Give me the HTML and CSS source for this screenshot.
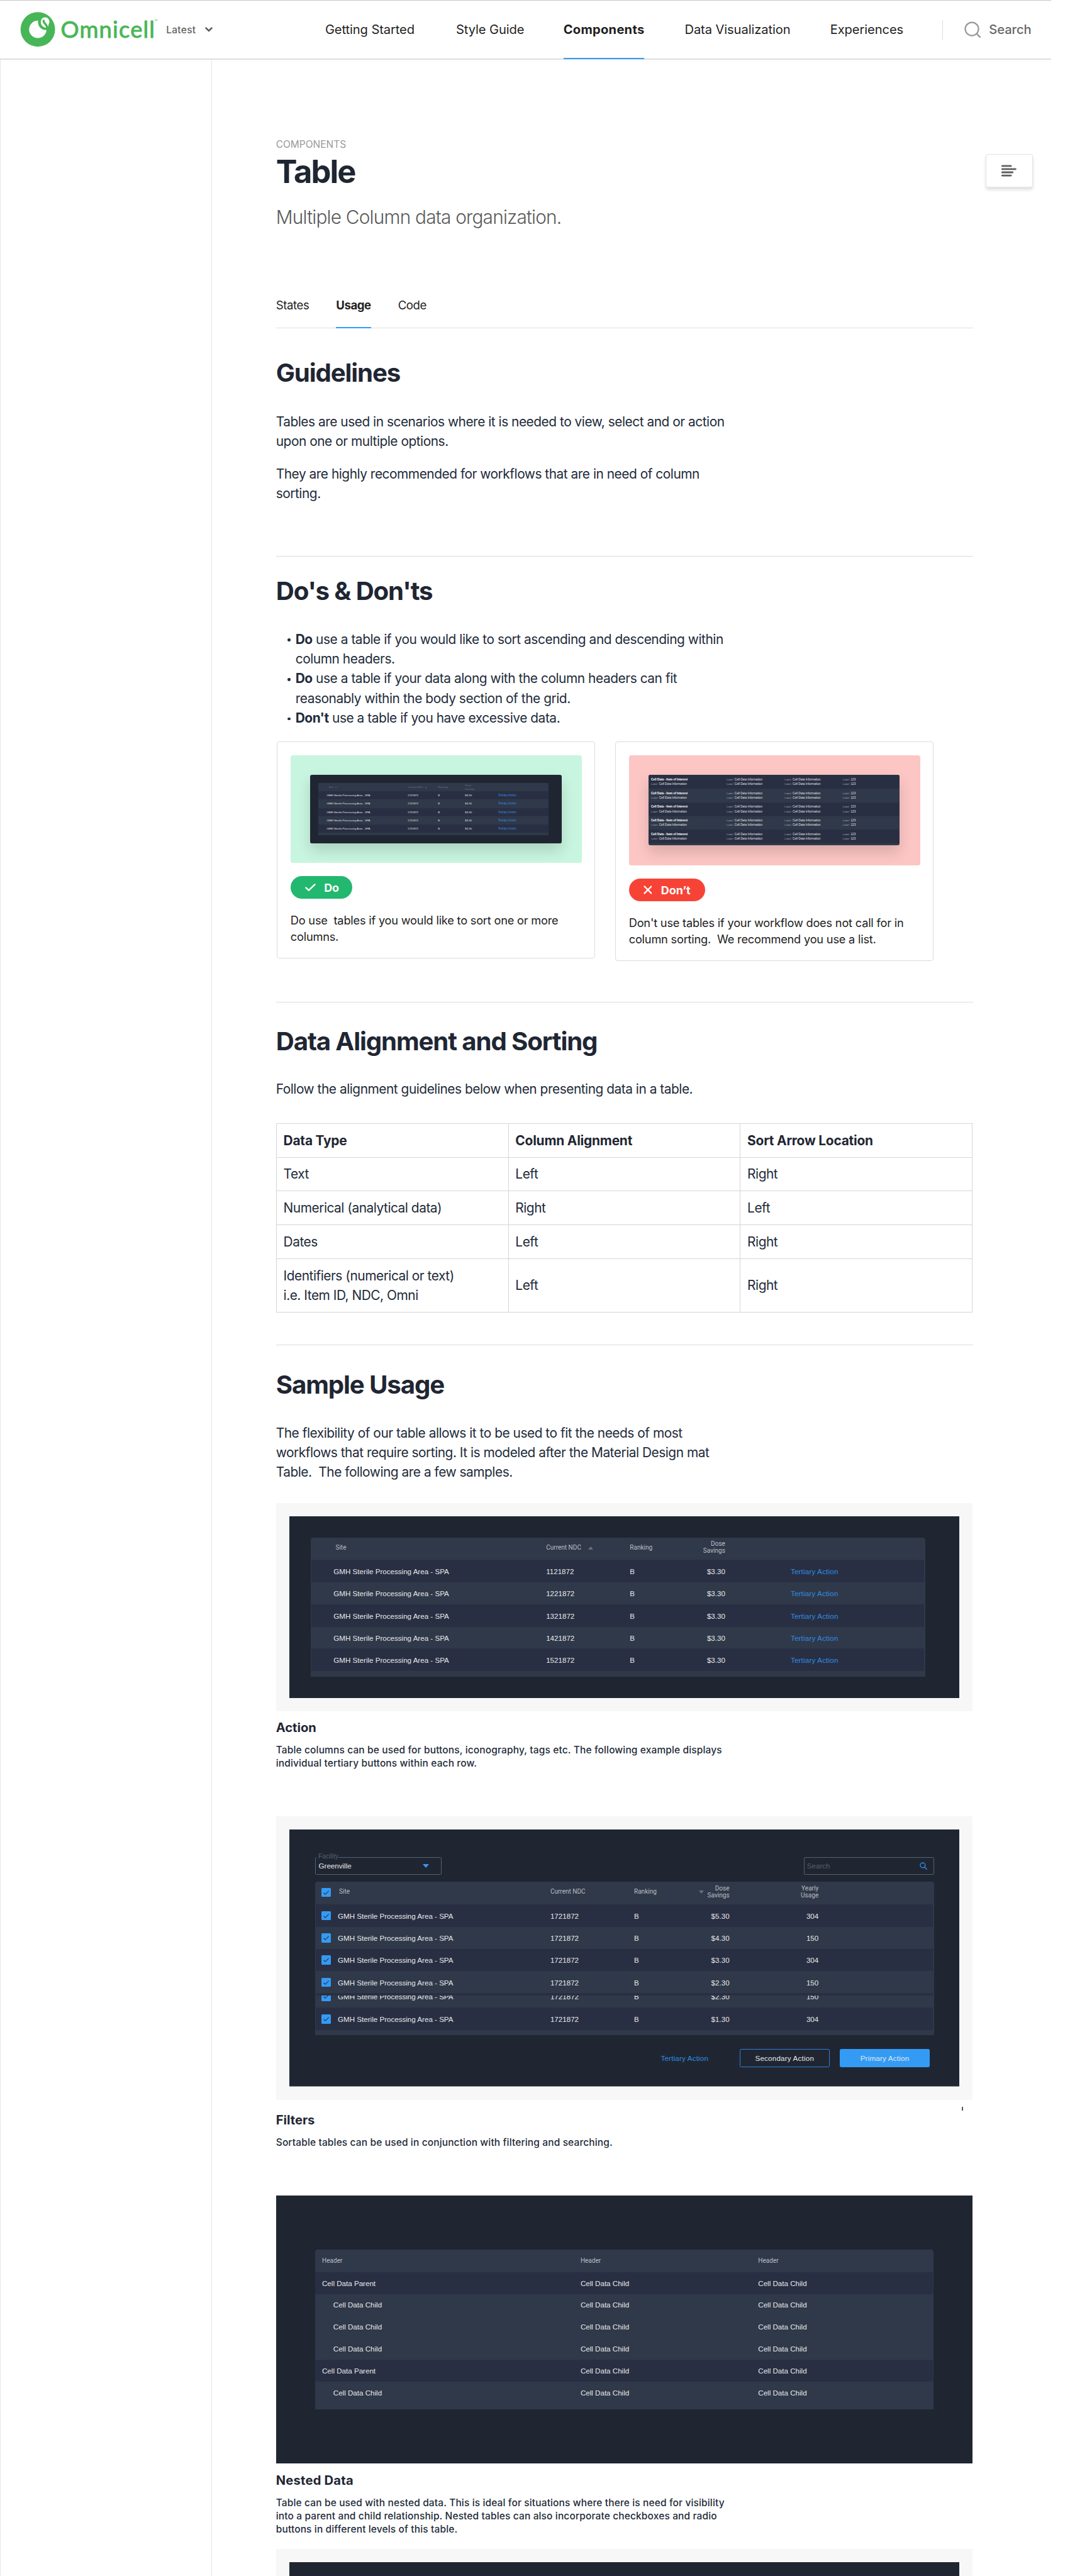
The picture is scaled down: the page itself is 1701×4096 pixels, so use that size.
FILE: index.html
```
<!DOCTYPE html>
<html lang="en">
<head>
<meta charset="utf-8">
<title>Table – Omnicell</title>
<link rel="stylesheet" href="styles.css">
</head>
<body>
<div class="page">
<header class="header">
  <div class="brand">
    <svg class="logo" viewBox="41 20 285 82" role="img" aria-label="Omnicell">
      <circle cx="77.3" cy="61" r="35.5" fill="#47b656"/>
      <circle cx="77.3" cy="61" r="17.9" fill="#fff"/>
      <path d="M77.9 42.5L97 42.5L96.500 56L95.300 61.500L91.500 62.300C82.500 60.500 76.500 53 77.900 42.500Z" fill="#47b656"/>
      <path d="M83.300 46.500A9 9 0 1 1 100.600 48.500L98.800 52.500Q100 57 92 57.500Q84 54.500 83.300 46.500Z" fill="#fff"/>
      <path d="M89.200 43.200C88.500 49 98.500 51 96.500 62" fill="none" stroke="#47b656" stroke-width="4.400" stroke-linecap="round"/>
      <text x="124.500" y="78" class="logo-word" textLength="193" lengthAdjust="spacing">Omnicell</text>
      <text x="316.800" y="47.600" class="logo-tm">™</text>
    </svg>
    <span class="version">Latest</span>
    <svg class="chevron" viewBox="0 0 18 12"><path d="M2.200 2.400L9 9L15.800 2.400" fill="none" stroke="#5c5c5c" stroke-width="3.400"/></svg>
  </div>
  <nav class="nav">
    <a><span>Getting Started</span></a><a><span>Style Guide</span></a><a class="on"><span>Components</span></a><a><span>Data Visualization</span></a><a><span>Experiences</span></a>
  </nav>
  <div class="search">
    <svg viewBox="0 0 36 36"><circle cx="16" cy="16" r="14" fill="none" stroke="#999" stroke-width="3"/><path d="M25.500 25.500L34 34" stroke="#999" stroke-width="3.200"/></svg>
    <span>Search</span>
  </div>
</header>
<div class="body">
<aside class="sidebar"></aside>
<main class="main">
  <div class="eyebrow">COMPONENTS</div>
  <h1>Table</h1>
  <p class="lead">Multiple Column data organization.</p>
  <nav class="tabs"><a>States</a><a class="on">Usage</a><a>Code</a></nav>

  <section class="s1">
    <h2>Guidelines</h2>
    <p>Tables are used in scenarios where it is needed to view, select and or action upon one or multiple options.</p>
    <p>They are highly recommended for workflows that are in need of column sorting.</p>
  </section>

  <section class="s2">
    <h2>Do's &amp; Don'ts</h2>
    <ul>
      <li><b>Do</b> use a table if you would like to sort ascending and descending within column headers.</li>
      <li><b>Do</b> use a table if your data along with the column headers can fit reasonably within the body section of the grid.</li>
      <li><b>Don't</b> use a table if you have excessive data.</li>
    </ul>
    <div class="cards">
      <article class="card do">
        <div class="shot">
          <div class="mini">
            <div class="mini-grid">
              <div class="mr mh"><span class="ind">Site <i class="dn"></i></span><span>Current NDC <i class="up"></i></span><span>Ranking</span><span>Dose<br>Savings</span></div>
              <div class="mr dk"><span>GMH Sterile Processing Area - SPA</span><span>1721872</span><span>B</span><span>$3.30</span><em>Tertiary Action</em></div>
              <div class="mr"><span>GMH Sterile Processing Area - SPA</span><span>1721872</span><span>B</span><span>$3.30</span><em>Tertiary Action</em></div>
              <div class="mr dk"><span>GMH Sterile Processing Area - SPA</span><span>1721872</span><span>B</span><span>$3.30</span><em>Tertiary Action</em></div>
              <div class="mr"><span>GMH Sterile Processing Area - SPA</span><span>1721872</span><span>B</span><span>$3.30</span><em>Tertiary Action</em></div>
              <div class="mr dk"><span>GMH Sterile Processing Area - SPA</span><span>1721872</span><span>B</span><span>$3.30</span><em>Tertiary Action</em></div>
            </div>
          </div>
        </div>
        <div class="pill"><svg viewBox="0 0 22 16"><path d="M1.800 8.500L7.500 13.800L20 1.800" fill="none" stroke="#fff" stroke-width="3" stroke-linecap="round" stroke-linejoin="round"/></svg>Do</div>
        <p>Do use &nbsp;tables if you would like to sort one or more columns.</p>
      </article>
      <article class="card dont">
        <div class="shot">
          <div class="mini">
            <div class="lr dk"><span><b>Cell Data - Item of Interest</b><br><i>Label</i> Cell Data Information</span><span><i>Label</i> Cell Data Information<br><i>Label</i> Cell Data Information</span><span><i>Label</i> Cell Data Information<br><i>Label</i> Cell Data Information</span><span><i>Label</i> 123<br><i>Label</i> 123</span></div>
            <div class="lr"><span><b>Cell Data - Item of Interest</b><br><i>Label</i> Cell Data Information</span><span><i>Label</i> Cell Data Information<br><i>Label</i> Cell Data Information</span><span><i>Label</i> Cell Data Information<br><i>Label</i> Cell Data Information</span><span><i>Label</i> 123<br><i>Label</i> 123</span></div>
            <div class="lr dk"><span><b>Cell Data - Item of Interest</b><br><i>Label</i> Cell Data Information</span><span><i>Label</i> Cell Data Information<br><i>Label</i> Cell Data Information</span><span><i>Label</i> Cell Data Information<br><i>Label</i> Cell Data Information</span><span><i>Label</i> 123<br><i>Label</i> 123</span></div>
            <div class="lr"><span><b>Cell Data - Item of Interest</b><br><i>Label</i> Cell Data Information</span><span><i>Label</i> Cell Data Information<br><i>Label</i> Cell Data Information</span><span><i>Label</i> Cell Data Information<br><i>Label</i> Cell Data Information</span><span><i>Label</i> 123<br><i>Label</i> 123</span></div>
            <div class="lr dk"><span><b>Cell Data - Item of Interest</b><br><i>Label</i> Cell Data Information</span><span><i>Label</i> Cell Data Information<br><i>Label</i> Cell Data Information</span><span><i>Label</i> Cell Data Information<br><i>Label</i> Cell Data Information</span><span><i>Label</i> 123<br><i>Label</i> 123</span></div>
          </div>
        </div>
        <div class="pill"><svg viewBox="0 0 18 18"><path d="M2 2L16 16M16 2L2 16" fill="none" stroke="#fff" stroke-width="3" stroke-linecap="round"/></svg>Don’t</div>
        <p>Don't use tables if your workflow does not call for in column sorting. &nbsp;We recommend you use a list.</p>
      </article>
    </div>
  </section>

  <section class="s3">
    <h2>Data Alignment and Sorting</h2>
    <p>Follow the alignment guidelines below when presenting data in a table.</p>
    <table class="spec">
      <tr><th>Data Type</th><th>Column Alignment</th><th>Sort Arrow Location</th></tr>
      <tr><td>Text</td><td>Left</td><td>Right</td></tr>
      <tr><td>Numerical (analytical data)</td><td>Right</td><td>Left</td></tr>
      <tr><td>Dates</td><td>Left</td><td>Right</td></tr>
      <tr class="tall"><td>Identifiers (numerical or text)<br>i.e. Item ID, NDC, Omni</td><td>Left</td><td>Right</td></tr>
    </table>
  </section>

  <section class="s4">
    <h2>Sample Usage</h2>
    <p>The flexibility of our table allows it to be used to fit the needs of most workflows that require sorting. It is modeled after the Material Design mat Table. &nbsp;The following are a few samples.</p>

    <figure class="fig f1">
      <div class="dark">
        <div class="grid g1">
          <div class="hd"><span class="ind">Site</span><span>Current NDC <i class="tri up"></i></span><span>Ranking</span><span class="r">Dose<br>Savings</span></div>
          <div class="row dk h47"><span>GMH Sterile Processing Area - SPA</span><span>1121872</span><span>B</span><span class="r">$3.30</span><em>Tertiary Action</em></div>
          <div class="row h45"><span>GMH Sterile Processing Area - SPA</span><span>1221872</span><span>B</span><span class="r">$3.30</span><em>Tertiary Action</em></div>
          <div class="row dk h46"><span>GMH Sterile Processing Area - SPA</span><span>1321872</span><span>B</span><span class="r">$3.30</span><em>Tertiary Action</em></div>
          <div class="row h45"><span>GMH Sterile Processing Area - SPA</span><span>1421872</span><span>B</span><span class="r">$3.30</span><em>Tertiary Action</em></div>
          <div class="row dk h46"><span>GMH Sterile Processing Area - SPA</span><span>1521872</span><span>B</span><span class="r">$3.30</span><em>Tertiary Action</em></div>
        </div>
      </div>
    </figure>
    <h3>Action</h3>
    <p class="desc">Table columns can be used for buttons, iconography, tags etc. The following example displays individual tertiary buttons within each row.</p>

    <figure class="fig f2">
      <div class="dark">
        <div class="tools">
          <div class="select"><label>Facility</label><span>Greenville</span><i class="tri"></i></div>
          <div class="find"><span>Search</span><svg viewBox="0 0 16 16"><circle cx="6.300" cy="6.300" r="5" fill="none" stroke="#2f8de4" stroke-width="1.800"/><path d="M10 10L15 15" stroke="#2f8de4" stroke-width="2"/></svg></div>
        </div>
        <div class="grid g2">
          <div class="hd"><svg class="cb" viewBox="0 0 19 19"><path d="M4.500 10L8 13.300L15 6"/></svg><span class="ind">Site</span><span>Current NDC</span><span>Ranking</span><span class="r sorted"><i class="tri dn"></i>Dose<br>Savings</span><span class="r">Yearly<br>Usage</span></div>
          <div class="row dk h47"><svg class="cb" viewBox="0 0 19 19"><path d="M4.500 10L8 13.300L15 6"/></svg><span>GMH Sterile Processing Area - SPA</span><span>1721872</span><span>B</span><span class="r">$5.30</span><span class="r">304</span></div>
          <div class="row h45"><svg class="cb" viewBox="0 0 19 19"><path d="M4.500 10L8 13.300L15 6"/></svg><span>GMH Sterile Processing Area - SPA</span><span>1721872</span><span>B</span><span class="r">$4.30</span><span class="r">150</span></div>
          <div class="row dk h46"><svg class="cb" viewBox="0 0 19 19"><path d="M4.500 10L8 13.300L15 6"/></svg><span>GMH Sterile Processing Area - SPA</span><span>1721872</span><span>B</span><span class="r">$3.30</span><span class="r">304</span></div>
          <div class="row h45"><svg class="cb" viewBox="0 0 19 19"><path d="M4.500 10L8 13.300L15 6"/></svg><span>GMH Sterile Processing Area - SPA</span><span>1721872</span><span>B</span><span class="r">$2.30</span><span class="r">150</span></div>
          <div class="sliver"></div>
          <div class="clip"><div class="row h45"><svg class="cb" viewBox="0 0 19 19"><path d="M4.500 10L8 13.300L15 6"/></svg><span>GMH Sterile Processing Area - SPA</span><span>1721872</span><span>B</span><span class="r">$2.30</span><span class="r">150</span></div></div>
          <div class="row dk h47"><svg class="cb" viewBox="0 0 19 19"><path d="M4.500 10L8 13.300L15 6"/></svg><span>GMH Sterile Processing Area - SPA</span><span>1721872</span><span>B</span><span class="r">$1.30</span><span class="r">304</span></div>
        </div>
        <div class="actions"><span class="tertiary">Tertiary Action</span><span class="btn">Secondary Action</span><span class="btn primary">Primary Action</span></div>
      </div>
      <i class="tick"></i>
    </figure>
    <h3>Filters</h3>
    <p class="desc">Sortable tables can be used in conjunction with filtering and searching.</p>

    <figure class="fig f3">
      <div class="grid g3">
        <div class="hd"><span>Header</span><span>Header</span><span>Header</span></div>
        <div class="row dk"><span>Cell Data Parent</span><span>Cell Data Child</span><span>Cell Data Child</span></div>
        <div class="row"><span class="child">Cell Data Child</span><span>Cell Data Child</span><span>Cell Data Child</span></div>
        <div class="row"><span class="child">Cell Data Child</span><span>Cell Data Child</span><span>Cell Data Child</span></div>
        <div class="row"><span class="child">Cell Data Child</span><span>Cell Data Child</span><span>Cell Data Child</span></div>
        <div class="row dk"><span>Cell Data Parent</span><span>Cell Data Child</span><span>Cell Data Child</span></div>
        <div class="row"><span class="child">Cell Data Child</span><span>Cell Data Child</span><span>Cell Data Child</span></div>
      </div>
    </figure>
    <h3 class="wide">Nested Data</h3>
    <p class="desc">Table can be used with nested data. This is ideal for situations where there is need for visibility into a parent and child relationship. Nested tables can also incorporate checkboxes and radio buttons in different levels of this table.</p>

    <figure class="fig f4"><div class="dark"></div></figure>
  </section>
</main>
</div>
<button class="toc" aria-label="Contents"><svg viewBox="0 0 31 25"><path d="M1.500 2.500H19.500M1.500 9H29M1.500 15.500H23M1.500 22H19.500" stroke="#5f5f5f" stroke-width="3.600" stroke-linecap="round"/></svg></button>
</div>
</body>
</html>
```
FILE: styles.css
```
/* 1rem = 100 design units */
html { font-size: 77.38px; }
* { box-sizing: border-box; }
body { margin: 0; background: #fff; font-family: Inter, sans-serif; color: #222b3a; }
h1, h2, h3, p, ul, figure { margin: 0; padding: 0; }
i, em { font-style: normal; }
svg { display: block; }

.page { position: relative; width: 21.98rem; height: 52.93rem; overflow: hidden; }

/* Header */
.header { display: flex; width: 21.59rem; height: 1.23rem; border-top: 1px solid #c8c8c8; border-bottom: 2px solid #dedede; color: #1f1f1f; }
.brand { display: flex; align-items: center; width: 6.68rem; padding-left: .41rem; flex: none; }
.logo { width: 2.85rem; height: .82rem; }
.logo-word { font: 400 47px Lato, sans-serif; fill: #47b656; stroke: #47b656; stroke-width: 1.1px; stroke-linejoin: round; }
.logo-tm { font: 400 9px Lato, sans-serif; fill: #47b656; }
.version { margin-left: .155rem; font-size: .2rem; font-weight: 500; letter-spacing: .019em; color: #5f5f5f; }
.chevron { width: .18rem; height: .12rem; margin-left: .172rem; }
.nav { display: grid; grid-template-columns: 2.69rem 2.206rem 2.491rem 2.988rem 2.3rem; flex: none; font-size: .26rem; letter-spacing: -.004em; line-height: 1.19rem; }
.nav span { display: inline-block; height: 100%; }
.nav .on { font-weight: 700; letter-spacing: .013em; }
.nav .on span { border-bottom: .035rem solid #349bf5; height: 1.2rem; }
.search { display: flex; align-items: center; align-self: center; height: .4rem; padding-left: .44rem; border-left: 1px solid #dcdcdc; font-size: .26rem; font-weight: 500; color: #666; }
.search svg { width: .35rem; height: .35rem; margin-right: .16rem; }

/* Frame */
.body { display: flex; }
.sidebar { width: 4.35rem; height: 51.7rem; flex: none; border-left: 1px solid #e6e6e6; border-right: 1px solid #e6e6e6; }
.main { width: 15.64rem; padding-left: 1.32rem; }

.eyebrow { margin-top: 1.632rem; font-size: .2rem; line-height: .24rem; color: #999; }
h1 { margin-top: .022rem; font-size: .655rem; line-height: .8rem; font-weight: 700; letter-spacing: -.038em; color: #1f2633; }
.lead { margin-top: .296rem; font-size: .385rem; line-height: .48rem; font-weight: 300; letter-spacing: -.0265em; color: #5a5a5a; }
.tabs { display: flex; gap: .555rem; height: .622rem; margin-top: 1.428rem; border-bottom: .02rem solid #e0e0e0; font-size: .24rem; line-height: .3rem; letter-spacing: -.022em; color: #222; }
.tabs .on { height: .622rem; border-bottom: .03rem solid #349bf5; font-weight: 700; }

h2 { font-size: .52rem; line-height: .64rem; font-weight: 700; letter-spacing: -.028em; color: #1f2633; }
section p, ul { width: 9.4rem; font-size: .27rem; line-height: .4045rem; letter-spacing: -.0229em; }
.s1 { height: 4.67rem; padding-top: .591rem; }
.s1 p { margin-top: .486rem; }
.s1 p + p { margin-top: .264rem; }
.s2, .s3, .s4 { border-top: 1px solid #dcdcdc; }
.s2 { height: 9.165rem; padding-top: .393rem; }
.s3 { height: 7.051rem; padding-top: .483rem; }
.s4 { padding-top: .492rem; }
.s2 h2 + ul { margin-top: .468rem; letter-spacing: -.0215em; }
.s3 p, .s4 h2 + p { margin-top: .459rem; }
ul { padding-left: .4rem; list-style: none; }
li { position: relative; }
li::before { content: ""; position: absolute; left: -.165rem; top: .19rem; width: .06rem; height: .06rem; border-radius: 50%; background: #222b3a; }
li b { font-weight: 700; }

/* Do / Don't cards */
.cards { display: flex; align-items: flex-start; gap: .412rem; margin: .285rem 0 0 .02rem; }
.card { width: 6.54rem; padding: .267rem .265rem .27rem; border: .02rem solid #dcdcdc; border-radius: .05rem; }
.shot { height: 2.21rem; border-radius: .05rem; background: #c8f5df; padding: .403rem 0 0 .407rem; }
.dont .shot { height: 2.26rem; background: #fcc6c4; padding-left: .4rem; }
.mini { width: 5.163rem; height: 1.404rem; padding: .167rem; border-radius: .04rem; background: #1f2632; box-shadow: 0 .14rem .28rem rgba(0, 0, 0, .14); font: .0565rem/.07rem "Liberation Sans", sans-serif; color: #e4e6ea; overflow: hidden; }
.mini-grid { width: 4.733rem; height: 1.067rem; background: #303949; }
.mr { display: grid; grid-template-columns: 1.66rem .624rem .556rem .68rem 1fr; align-items: center; height: .171rem; padding-left: .173rem; }
.mr.dk, .lr.dk, .row.dk { background: #292f42; }
.mr span { white-space: nowrap; }
.mr em { font-size: .06rem; color: #2f8de4; }
.mh { color: #6a7280; line-height: .07rem; }
.mh i { display: inline-block; border: .02rem solid transparent; margin-left: .02rem; }
.mh .dn { border-top: .035rem solid #6a7280; border-bottom: 0; }
.mh .up { border-bottom: .035rem solid #6a7280; border-top: 0; }
.dont .mini { height: 1.45rem; padding: 0; background: #303949; font-size: .061rem; line-height: .093rem; }
.lr { display: grid; grid-template-columns: 1.552rem 1.193rem 1.194rem 1fr; align-items: center; height: .2817rem; padding-left: .055rem; white-space: nowrap; }
.lr i { display: inline-block; width: .148rem; font-size: .055rem; color: #9aa1ac; }
.lr b { color: #fff; }
.pill { display: flex; align-items: center; width: 1.267rem; height: .473rem; margin-top: .27rem; padding-left: .295rem; border-radius: .24rem; background: #22b870; color: #fff; font-size: .232rem; font-weight: 700; }
.pill svg { width: .22rem; height: .16rem; margin-right: .175rem; }
.dont .pill { width: 1.564rem; background: #f74336; }
.dont .pill svg { width: .18rem; height: .18rem; margin-right: .185rem; }
.card p { width: auto; margin-top: .263rem; font-size: .235rem; line-height: .337rem; letter-spacing: -.0105em; color: #222; }

/* Alignment table */
.spec { width: 14.31rem; margin-top: .499rem; border-collapse: collapse; table-layout: fixed; font-size: .27rem; line-height: .4045rem; letter-spacing: -.0229em; }
.spec th, .spec td { height: .694rem; padding: 0 .14rem; border: 1px solid #d6d6d6; text-align: left; vertical-align: middle; }
.spec th { font-weight: 700; letter-spacing: -.01em; color: #1f2633; }
.spec .tall td { height: 1.1rem; }

/* Sample figures */
h3 { font-size: .26rem; line-height: .32rem; font-weight: 700; color: #1f2633; }
h3.wide { letter-spacing: .012em; }
section .desc { margin-top: .172rem; font-size: .2rem; line-height: .27rem; font-weight: 500; letter-spacing: .0096em; }
.fig { position: relative; width: 14.31rem; background: #f7f7f7; font: .15rem/.2rem "Liberation Sans", sans-serif; color: #e6e8eb; }
.dark { background: #1f2632; }
.grid { background: #303949; border-radius: .05rem .05rem 0 0; }
.hd, .row { display: grid; align-items: center; }
.hd { font: .13rem/.147rem Roboto, sans-serif; color: #b9bdc3; padding-bottom: .052rem; }
.row { margin: 0 .02rem; padding-top: .012rem; }
.row em, .tertiary { color: #2f8de4; letter-spacing: .0165em; }
.r { text-align: right; }
.h45 { height: .45rem; }
.h46 { height: .46rem; }
.h47 { height: .47rem; }
.tri { display: inline-block; border: .055rem solid transparent; }
.tri.up { border-top: 0; border-bottom: .07rem solid #66727a; margin-left: .11rem; }
.tri.dn { border-bottom: 0; border-top: .07rem solid #66727a; }
.ind { padding-left: .04rem; }

.f1 { height: 4.282rem; margin-top: .434rem; padding: .267rem .27rem 0; }
.f1 .dark { height: 3.745rem; padding: .445rem 0 0 .44rem; }
.g1 { width: 12.63rem; height: 2.85rem; }
.g1 .hd, .g1 .row { grid-template-columns: 4.366rem 1.72rem .6rem 1.36rem 1.344rem 1fr; padding-left: .474rem; }
.g1 .hd { height: .45rem; }
.g1 .row { padding-left: .454rem; }
.g1 em { grid-column: 6; }
.f1 + h3 { margin-top: .182rem; }

.f2 { height: 5.82rem; margin-top: .944rem; padding: .272rem .27rem 0; }
.f2 .dark { height: 5.28rem; padding: .563rem .525rem 0 .533rem; border-bottom: 1px solid #8b8f96; }
.tools { display: flex; justify-content: space-between; margin-bottom: .147rem; }
.select, .find { position: relative; display: flex; align-items: center; justify-content: space-between; height: .364rem; border: 1px solid #55626c; border-radius: .02rem; }
.select { width: 2.6rem; padding: 0 .25rem 0 .06rem; }
.select label { position: absolute; left: .02rem; top: -.1rem; padding: 0 0 0 .035rem; background: #1f2632; font-size: .13rem; line-height: .16rem; letter-spacing: .01em; color: #55616c; }
.select .tri { border: .065rem solid transparent; border-top: .08rem solid #349bf5; border-bottom: 0; }
.find { width: 2.67rem; padding: 0 .115rem 0 .05rem; color: #55616c; }
.find svg { width: .16rem; height: .16rem; }
.g2 { height: 3.152rem; }
.g2 .hd, .g2 .row { grid-template-columns: .334rem 4.366rem 1.72rem .6rem 1.36rem 1.83rem; }
.g2 .hd { height: .456rem; padding-left: .134rem; }
.g2 .row { padding-left: .114rem; }
.cb { position: relative; top: -.005rem; width: .19rem; height: .19rem; border-radius: .02rem; background: #349bf5; }
.hd .cb { top: .012rem; }
.cb path { fill: none; stroke: #263450; stroke-width: 1.5; }
.g2 .ind { padding-left: .025rem; }
.sorted { position: relative; }
.sorted .tri { position: absolute; right: .53rem; top: .12rem; }
.sliver { height: .05rem; margin: 0 .02rem; background: #292f42; }
.clip { height: .243rem; overflow: hidden; }
.clip .row { margin-top: -.207rem; }
.actions { display: flex; justify-content: flex-end; align-items: center; margin: .284rem .086rem 0 0; }
.btn { width: 1.845rem; height: .373rem; margin-left: .213rem; border: 1px solid #2f7fd0; border-radius: .03rem; text-align: center; line-height: .355rem; letter-spacing: .018em; }
.tertiary { margin-right: .43rem; padding-top: .01rem; }
.primary { background: #349bf5; border-color: #349bf5; }
.tick { position: absolute; left: 14.095rem; top: 5.97rem; width: .025rem; height: .07rem; background: #555; }
.f2 + h3 { margin-top: .258rem; }

.f3 { height: 5.513rem; margin-top: .946rem; padding: 1.118rem 0 0 .807rem; background: #1f2632; }
.g3 { width: 12.7rem; height: 3.277rem; }
.g3 .hd, .g3 .row { grid-template-columns: 5.31rem 3.65rem 1fr; padding-left: .14rem; }
.g3 .hd { height: .462rem; padding-bottom: 0; }
.g3 .row { height: .45rem; margin: 0 .01rem 0 0; padding-top: 0; }
.child { padding-left: .23rem; }
.f3 + h3 { margin-top: .187rem; }

.f4 { height: .6rem; margin-top: .269rem; padding: .27rem .27rem 0; }
.f4 .dark { height: 1rem; }

/* Floating contents button */
.toc { position: absolute; left: 20.247rem; top: 3.16rem; display: flex; align-items: center; justify-content: center; width: .975rem; height: .697rem; padding: 0; border: 1px solid #e4e4e4; border-radius: .05rem; background: #fff; box-shadow: 0 .04rem .07rem rgba(0, 0, 0, .12); }
.toc svg { width: .31rem; height: .25rem; }
```
